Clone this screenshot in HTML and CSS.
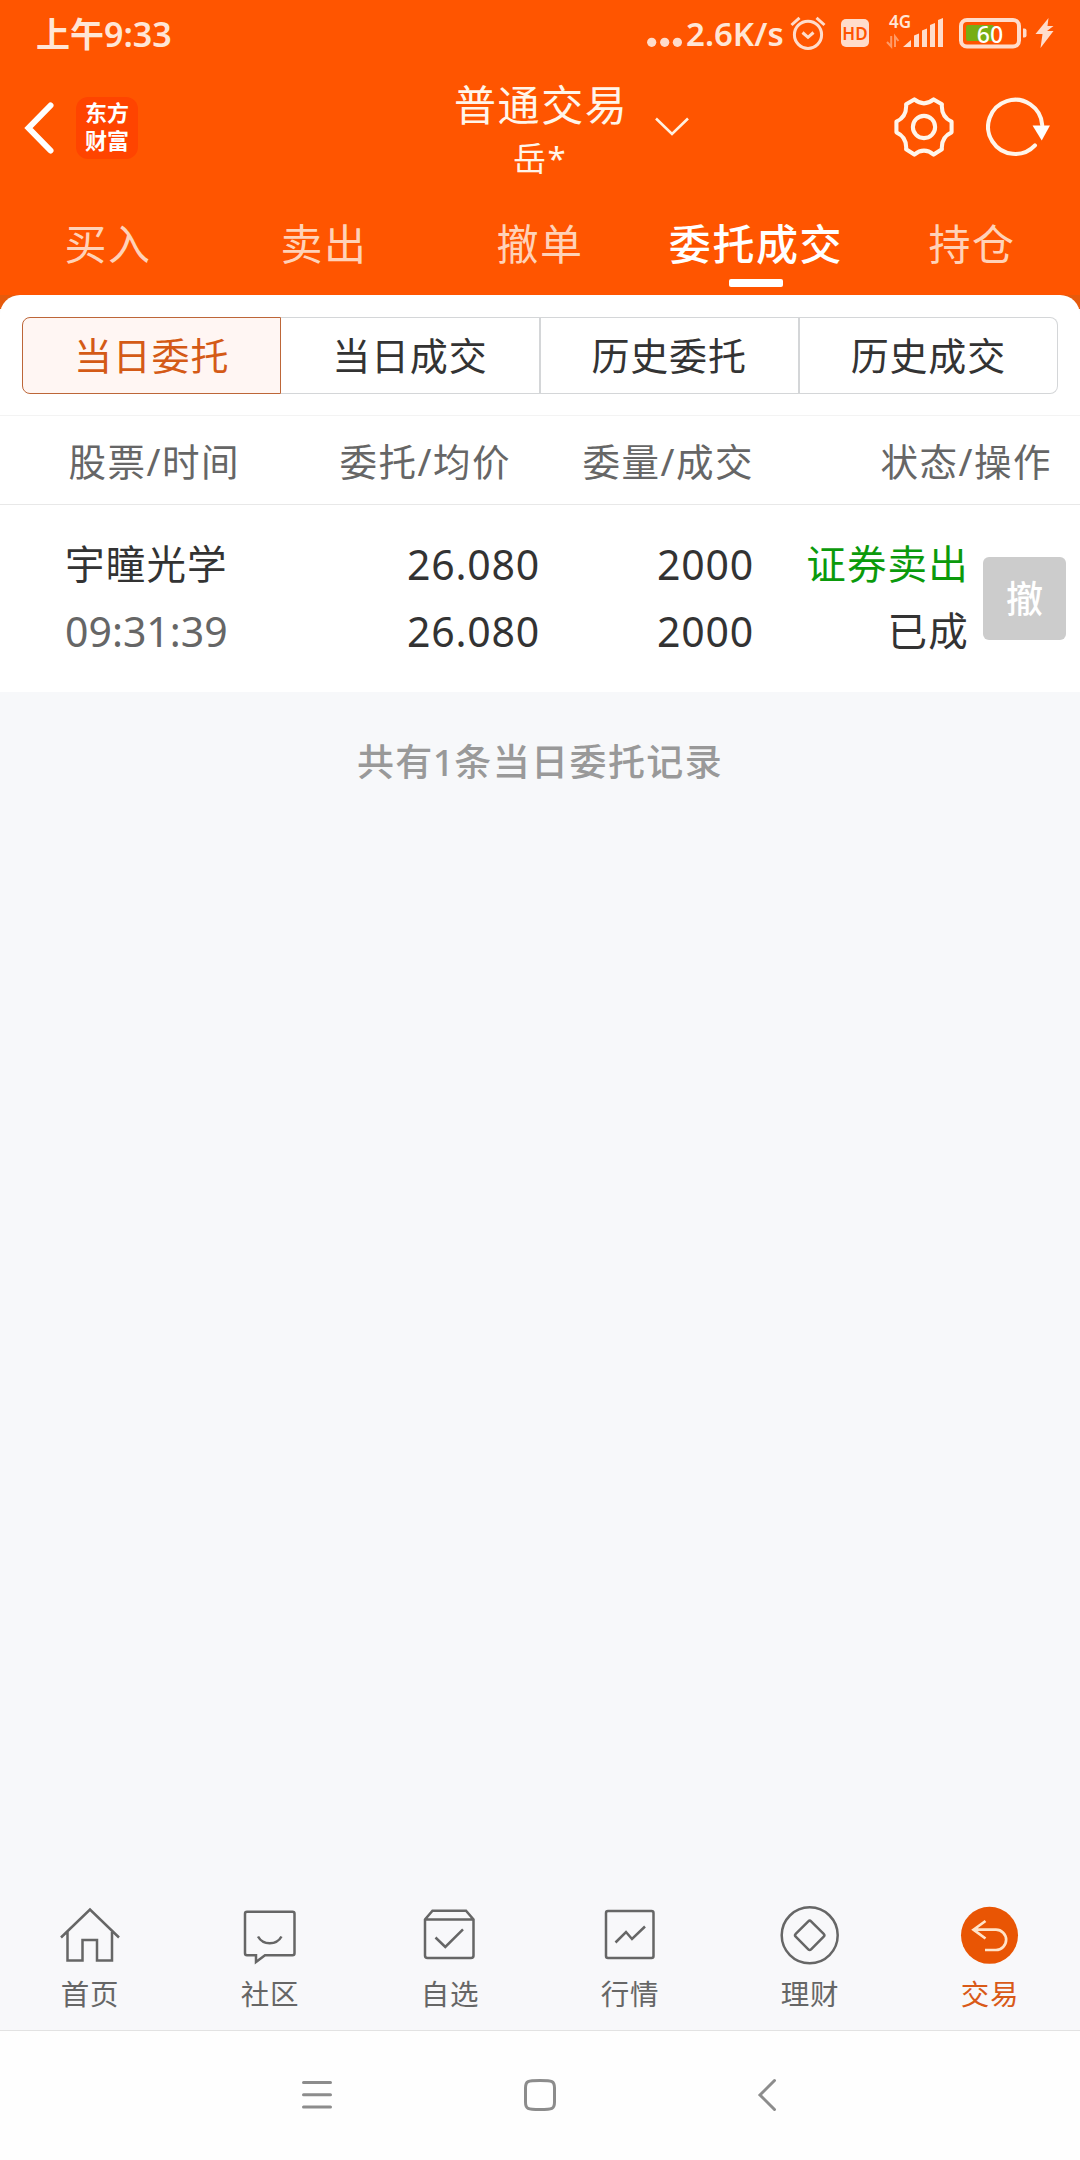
FILE: index.html
```html
<!DOCTYPE html>
<html lang="zh-CN">
<head>
<meta charset="utf-8">
<title>普通交易</title>
<link rel="stylesheet" href="styles.css">
</head>
<body>
<div class="app">
  <header class="header">
    <div class="status">
      <div class="clock">上午9:33</div>
      <div class="indicators">
        <svg class="dots" width="36" height="60" viewBox="0 0 36 60"><circle cx="4.7" cy="42.3" r="4.6"/><circle cx="17.7" cy="42.3" r="4.6"/><circle cx="30.4" cy="42.3" r="4.6"/></svg>
        <span class="speed">2.6K/s</span>
        <svg class="alarm" width="36" height="60" viewBox="0 0 36 60"><circle cx="18" cy="34.8" r="13.6"/><path d="M12.5 32.5L18 37.3L23.5 32.5M1.5 25L9.5 17.8M34.5 25L26.5 17.8"/></svg>
        <span class="hd">HD</span>
        <div class="signal">
          <span class="net">4G</span>
          <svg width="58" height="60" viewBox="0 0 58 60"><path class="arrows" d="M5.2 36V46.5L1 42M9 47V36.5L12.5 41"/><path d="M17 47L25 40V47ZM28 35.5L33 33.5V47H28ZM36 30.5L41 28.5V47H36ZM44 25L49 23V47H44ZM52 20L57 18V47H52Z"/></svg>
        </div>
        <div class="battery">
          <svg width="70" height="60" viewBox="0 0 70 60"><rect class="level" x="7" y="25" width="28" height="16" rx="2"/><rect class="shell" x="2" y="20" width="58" height="26.5" rx="6"/><path d="M64 28.5h1.5q2 0 2 2v5q0 2-2 2H64z"/></svg>
          <span class="percent">60</span>
        </div>
        <svg class="bolt" width="20" height="60" viewBox="0 0 20 60"><path d="M13.5 18L.5 34H7.5L5.500 48L18.500 31H12L18.500 26H12.500Z"/></svg>
      </div>
    </div>

    <div class="titlebar">
      <div class="title-left">
        <svg class="back" width="32" height="54" viewBox="0 0 32 54"><path d="M27.5 4.500L5.500 27L27.500 49.500"/></svg>
        <div class="logo"><span>东方</span><span>财富</span></div>
      </div>
      <div class="title">
        <div class="title-main">普通交易</div>
        <div class="title-sub">岳*</div>
      </div>
      <svg class="chevron" width="36" height="22" viewBox="0 0 36 22"><path d="M2 2.500L18 18L34 2.500"/></svg>
      <div class="title-right">
        <svg width="60" height="60" viewBox="0 0 62 62"><path d="M21 2.500Q31 10.500 41 2.500L49.500 7.500Q48.500 20.500 59.500 25.500V36.500Q48.500 41.500 49.500 54L41 59.500Q31 51.500 21 59.500L12.500 54Q13.500 41.500 2.500 36.500V25.500Q13.500 20.500 12.500 7.500Z"/><circle cx="31" cy="31" r="11.500"/></svg>
        <svg width="66" height="60" viewBox="0 0 68 62"><path d="M50.500 50A28 28 0 1 1 58 29"/><path class="solid" d="M48 29.500H66L57.500 45Z"/></svg>
      </div>
    </div>

    <nav class="tabs">
      <a>买入</a><a>卖出</a><a>撤单</a><a class="active">委托成交</a><a>持仓</a>
    </nav>
  </header>

  <main class="sheet-wrap">
    <section class="sheet">
      <div class="segments">
        <button class="seg on">当日委托</button><button class="seg">当日成交</button><button class="seg">历史委托</button><button class="seg">历史成交</button>
      </div>
      <div class="row head">
        <span class="c1">股票/时间</span><span class="c2">委托/均价</span><span class="c3">委量/成交</span><span class="c4">状态/操作</span>
      </div>
      <div class="row record">
        <div class="cell name"><span>宇瞳光学</span><span class="num time">09:31:39</span></div>
        <div class="cell price"><span class="num">26.080</span><span class="num">26.080</span></div>
        <div class="cell qty"><span class="num">2000</span><span class="num">2000</span></div>
        <div class="cell state"><span class="sell">证券卖出</span><span>已成</span></div>
        <button class="cancel">撤</button>
      </div>
    </section>
    <p class="summary">共有<span class="one">1</span>条当日委托记录</p>
  </main>

  <nav class="tabbar">
    <a><svg width="60" height="60" viewBox="0 0 60 60"><path d="M1 32.500L30 4.500L59 32.500M7.500 27V55.500H22.500V35H37V55.500H52V27"/></svg>首页</a>
    <a><svg width="60" height="60" viewBox="0 0 60 60"><path d="M7 6.700H52.500Q54.500 6.700 54.500 8.700V48.300Q54.500 50.300 52.500 50.300H25L16 57V50.300H7Q5 50.300 5 48.300V8.700Q5 6.700 7 6.700ZM18 31.500C23 40.500 36.500 40.500 41.500 31.500"/></svg>社区</a>
    <a><svg width="60" height="60" viewBox="0 0 60 60"><path d="M12.500 5.700H46L53.500 14.500V50.500Q53.500 53 51 53H7.500Q5 53 5 50.500V14.500ZM5 14.500H53.500M15.500 32.500L25.300 42L43 24.300"/></svg>自选</a>
    <a><svg width="60" height="60" viewBox="0 0 60 60"><rect x="6" y="6" width="47.500" height="47" rx="2"/><path d="M15.500 37.500L26 27L32 34L45 21.500"/></svg>行情</a>
    <a><svg width="60" height="60" viewBox="0 0 60 60"><circle cx="29.700" cy="30.300" r="28"/><path d="M28.300 16.300Q29.700 14.900 31.100 16.300L43.700 28.900Q45.100 30.300 43.700 31.700L31.100 44.300Q29.700 45.700 28.300 44.300L15.700 31.700Q14.300 30.300 15.700 28.900Z"/></svg>理财</a>
    <a class="current"><svg width="60" height="60" viewBox="0 0 60 60"><circle class="disc" cx="29.500" cy="30.300" r="28.500"/><path class="arrow" d="M25.500 16L13.500 24.700L25.500 33.500M13.500 24.700H36A10 10 0 0 1 36 45H25"/></svg>交易</a>
  </nav>

  <footer class="sysnav">
    <svg width="32" height="34" viewBox="0 0 32 34"><path d="M2.500 4.500H29.500M2.500 16.800H29.500M2.500 29H29.500"/></svg>
    <svg width="34" height="34" viewBox="0 0 34 34"><path d="M17 2.500C29.500 2.500 31.500 3 31.500 10V24C31.500 31 29.500 31.500 17 31.500S2.500 31 2.500 24V10C2.500 3 4.500 2.500 17 2.500Z"/></svg>
    <svg width="20" height="34" viewBox="0 0 20 34"><path d="M17.500 2.500L3 17L17.500 31.500"/></svg>
  </footer>
</div>
</body>
</html>
```
FILE: styles.css
```css
* { box-sizing: border-box; }

body {
  margin: 0;
  font-family: "Noto Sans", "Noto Sans CJK SC", sans-serif;
  color: #333;
}

.app {
  width: 1080px;
  height: 2160px;
  display: flex;
  flex-direction: column;
  background: #f7f8fa;
  overflow: hidden;
}

svg { display: block; flex: none; }
button { font-family: inherit; margin: 0; padding: 0; }

/* header */
.header { height: 295px; background: #ff5500; color: #fff5ea; }

.status {
  height: 68px;
  display: flex;
  justify-content: space-between;
  color: #ffe6d6;
  padding: 0 25px 0 36px;
}
.clock {
  font-size: 34px;
  line-height: 68px;
  font-weight: 600;
}

.indicators { display: flex; fill: #ffdccb; }
.speed {
  width: 98px;
  margin-left: 3px;
  font-weight: 600;
  font-size: 33px;
  line-height: 68px;
  white-space: nowrap;
}
.alarm { margin-left: 6px; fill: none; stroke: #ffdccb; stroke-width: 3; }
.hd {
  width: 28px;
  height: 28px;
  margin: 19px 0 0 15px;
  border-radius: 5px;
  background: #ffdccb;
  color: #ff5500;
  font-weight: 600;
  font-size: 17px;
  line-height: 29px;
  text-align: center;
}
.signal { position: relative; margin-left: 17px; }
.arrows { fill: none; stroke: #ff9a66; stroke-width: 2; }
.net {
  position: absolute;
  left: 3px;
  top: 13px;
  font-weight: 600;
  font-size: 17px;
  line-height: 18px;
}
.battery { position: relative; margin-left: 15px; }
.shell { fill: none; stroke: #ffdccb; stroke-width: 4; }
.level { fill: #77ad14; }
.percent {
  position: absolute;
  left: 0;
  top: 20px;
  width: 62px;
  text-align: center;
  font-weight: 500;
  font-size: 23px;
  line-height: 28px;
  color: #fff;
}
.bolt { margin-left: 6px; }

.titlebar {
  height: 134px;
  display: grid;
  grid-template-columns: 454px 172px 54px 1fr;
  align-items: start;
}
.title-left { display: flex; padding: 29px 0 0 23px; }
.back { margin-top: 4px; fill: none; stroke: #fff; stroke-width: 6; stroke-linecap: round; }
.logo {
  width: 62px;
  height: 62px;
  margin-left: 21px;
  border-radius: 12px;
  background: #ff4400;
  color: #fff;
  display: flex;
  flex-direction: column;
  align-items: center;
  padding-top: 2px;
  font-size: 22px;
  line-height: 27.500px;
  font-weight: 700;
}
.title { text-align: center; white-space: nowrap; }
.title-main { font-size: 42px; line-height: 60px; letter-spacing: 1.6px; padding-top: 7px; }
.title-sub { font-size: 33px; line-height: 44px; letter-spacing: 1.500px; padding-top: 2px; }
.chevron { margin: 48px 0 0 28px; fill: none; stroke: #fff0e0; stroke-width: 2.6; }
.title-right {
  display: flex;
  gap: 32px;
  padding: 29px 28px 0 0;
  justify-content: flex-end;
  fill: none;
  stroke: #fff5ea;
  stroke-width: 4.2;
  stroke-linejoin: round;
  stroke-linecap: round;
}
.title-right .solid { fill: #fff; stroke: none; }

.tabs { display: grid; grid-template-columns: repeat(5, 1fr); height: 93px; }
.tabs a {
  text-align: center;
  font-size: 42px;
  line-height: 83px;
  letter-spacing: 1.6px;
  color: #ffd2b8;
  white-space: nowrap;
}
.tabs .active { color: #fff; font-weight: 500; }
.tabs .active::after {
  content: "";
  display: block;
  width: 54px;
  height: 8px;
  margin: -6px auto 0;
  border-radius: 2px;
  background: #fff;
}

/* white sheet */
.sheet-wrap { flex: 1; }
.sheet-wrap { background: linear-gradient(#e65a0c 0 14px, #f7f8fa 14px); }
.sheet { background: #fff; border-radius: 20px 20px 0 0; height: 397px; }

.segments { display: flex; height: 121px; padding: 22px 22px 0; border-bottom: 1px solid #f3f3f3; }
.seg {
  flex: 1;
  height: 77px;
  background: #fff;
  border: 1px solid #d4d6d8;
  border-left-width: 0;
  border-right-width: 2px;
  font-size: 38px;
  line-height: 75px;
  letter-spacing: .8px;
  color: #333;
}
.seg:last-child { border-radius: 0 8px 8px 0; border-right-width: 1px; }
.seg.on {
  border: 1px solid #bd6638;
  border-radius: 8px 0 0 8px;
  background: #fff6f3;
  color: #d45a16;
}

.head {
  height: 89px;
  border-bottom: 1px solid #e8e8e8;
  display: grid;
  grid-template-columns: 240px 271px 243px 298px;
  text-align: right;
  font-size: 37.500px;
  line-height: 91px;
  letter-spacing: 1.500px;
  color: #666;
}

.record {
  display: flex;
  padding-top: 26px;
  font-size: 39.500px;
}
.cell { display: flex; flex-direction: column; text-align: right; line-height: 67px; letter-spacing: 1.200px; }
.cell span { height: 67px; }
.name { width: 240px; padding-left: 65px; text-align: left; }
.price { width: 300px; }
.qty { width: 214px; }
.state { width: 215px; }
.num { font-size: 41px; letter-spacing: .8px; }
.time { color: #666; letter-spacing: 0; }
.sell { color: #0b9a0b; }
.cancel {
  width: 83px;
  height: 83px;
  margin: 26px 0 0 14px;
  border: 0;
  border-radius: 6px;
  background: #ccc;
  color: #fff;
  font-size: 37px;
  font-weight: 500;
  line-height: 84px;
}

.summary {
  margin: 40px 0 0;
  text-align: center;
  font-size: 37px;
  line-height: 60px;
  letter-spacing: 1.400px;
  font-weight: 500;
  color: #999;
}
.one { margin: 0 -1px; }

/* bottom navigation */
.tabbar {
  height: 131px;
  display: grid;
  grid-template-columns: repeat(6, 1fr);
  background: #f8f8fa;
  border-bottom: 1px solid #e2e2e2;
}
.tabbar a {
  display: flex;
  flex-direction: column;
  align-items: center;
  gap: 11px;
  padding-top: 5px;
  font-size: 28.500px;
  line-height: 36px;
  letter-spacing: .800px;
  color: #666;
}
.tabbar svg { fill: none; stroke: #666; stroke-width: 2.500; }
.tabbar .current { color: #d95a18; }
.tabbar .disc { fill: #e95504; stroke: none; }
.tabbar .arrow { stroke: #ffe3c8; stroke-width: 2.700; }

.sysnav {
  height: 129px;
  background: #fefefe;
  display: flex;
  padding: 47px 0 0 301px;
  fill: none;
  stroke: #8c8c8c;
  stroke-width: 3;
  stroke-linecap: round;
}
.sysnav svg:nth-child(2) { margin-left: 190px; }
.sysnav svg:nth-child(3) { margin-left: 200px; }
```
